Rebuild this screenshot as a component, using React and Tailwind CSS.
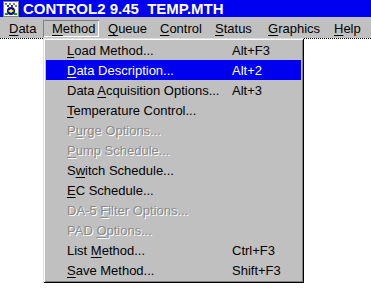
import React from "react";

const font = { fontFamily: '"Liberation Sans", Arial, sans-serif' };

function M({ text, u }) {
  if (u === undefined || u < 0) return <>{text}</>;
  return (
    <>
      {text.slice(0, u)}
      <span className="underline decoration-1 underline-offset-[2px]">{text[u]}</span>
      {text.slice(u + 1)}
    </>
  );
}

const menuBar = [
  { t: "Data", w: "w-[43px]" },
  { t: "Method", w: "w-[56px]", active: true },
  { t: "Queue", w: "w-[52px]" },
  { t: "Control", w: "w-[55px]" },
  { t: "Status", w: "w-[53px]" },
  { t: "Graphics", w: "w-[66px]" },
  { t: "Help", w: "w-[40px]" },
];

const items = [
  { t: "Load Method...", u: 0, k: "Alt+F3" },
  { t: "Data Description...", u: 0, k: "Alt+2", sel: true },
  { t: "Data Acquisition Options...", u: 5, k: "Alt+3" },
  { t: "Temperature Control...", u: 0 },
  { t: "Purge Options...", u: 1, dis: true },
  { t: "Pump Schedule...", u: 0, dis: true },
  { t: "Switch Schedule...", u: 1 },
  { t: "EC Schedule...", u: 0 },
  { t: "DA-5 Filter Options...", u: 5, dis: true },
  { t: "PAD Options...", u: 4, dis: true },
  { t: "List Method...", u: 5, k: "Ctrl+F3" },
  { t: "Save Method...", u: 0, k: "Shift+F3" },
];

function AppIcon() {
  return (
    <svg width="16" height="16" viewBox="0 0 16 16" className="block">
      <rect x="0" y="0" width="16" height="16" fill="#ffffff" />
      <rect x="0.5" y="0.5" width="15" height="15" fill="none" stroke="#808080" />
      <rect x="2" y="2" width="2" height="2" fill="#808080" />
      <rect x="6" y="2" width="2" height="2" fill="#808080" />
      <rect x="10" y="2" width="2" height="2" fill="#808080" />
      <rect x="4" y="4" width="2" height="2" fill="#404040" />
      <rect x="8" y="4" width="2" height="2" fill="#404040" />
      <rect x="12" y="4" width="2" height="2" fill="#808080" />
      <circle cx="8" cy="10" r="4" fill="#0000c0" />
      <path d="M5 10 L8 8 L11 10 L8 12 Z" fill="#ffff00" />
      <rect x="2" y="12" width="3" height="2" fill="#00a000" />
      <rect x="11" y="12" width="3" height="2" fill="#00a000" />
    </svg>
  );
}

export default function App() {
  return (
    <div className="relative w-[371px] h-[302px] bg-white overflow-hidden" style={font}>
      {/* Title bar */}
      <div className="h-[17px] bg-[#0000f0] flex items-center pl-[3px] gap-[4px]">
        <AppIcon />
        <span className="text-white font-bold text-[15px] leading-none whitespace-pre">
          CONTROL2 9.45  TEMP.MTH
        </span>
      </div>
      {/* Menu bar */}
      <div className="h-[21px] bg-[#c0c0c0] flex items-stretch pt-[3px] pb-[1px] text-[13px] text-black">
        {menuBar.map((m) => (
          <div
            key={m.t}
            className={
              m.w +
              " flex items-center pl-[9px] whitespace-nowrap leading-none " +
              (m.active
                ? "shadow-[inset_1px_1px_0_#808080,inset_-1px_-1px_0_#ffffff]"
                : "")
            }
          >
            <M text={m.t} u={0} />
          </div>
        ))}
      </div>
      {/* Client area */}
      <div className="border-t border-dotted border-black h-[264px] bg-white" />

      {/* Dropdown menu */}
      <div className="absolute left-[43px] top-[38px] w-[261px] h-[245px] bg-[#c0c0c0] px-[3px] py-[2px] shadow-[inset_1px_1px_0_#dfdfdf,inset_-1px_-1px_0_#000000,inset_2px_2px_0_#ffffff,inset_-2px_-2px_0_#808080] text-[13px]">
        {items.map((it) => (
          <div
            key={it.t}
            className={
              "h-[20px] flex items-center pl-[21px] whitespace-nowrap leading-none " +
              (it.sel ? "bg-[#0000f0] text-white" : it.dis ? "text-[#8a8a8a] [text-shadow:1px_1px_0_#ffffff]" : "text-black")
            }
          >
            <span className="w-[165px]">
              <M text={it.t} u={it.u} />
            </span>
            {it.k && <span>{it.k}</span>}
          </div>
        ))}
      </div>
    </div>
  );
}
